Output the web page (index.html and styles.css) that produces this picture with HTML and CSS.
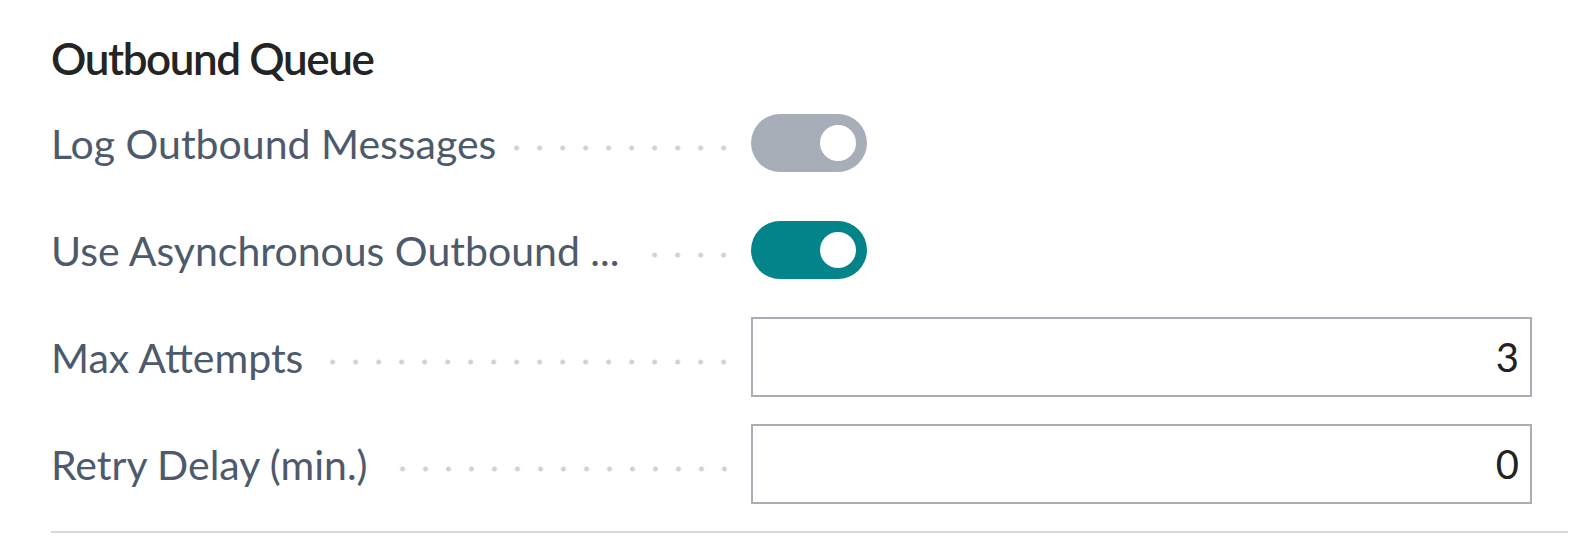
FILE: index.html
```html
<!DOCTYPE html>
<html lang="en">
<head>
<meta charset="utf-8">
<title>Outbound Queue</title>
<link rel="stylesheet" href="styles.css">
</head>
<body>
<section class="group">
  <h2 class="group-title">Outbound Queue</h2>
  <div class="form">
    <div class="caption"><span class="caption-text">Log Outbound Messages</span><span class="leader"></span></div>
    <div class="control"><span class="toggle toggle-off"><span class="knob"></span></span></div>

    <div class="caption"><span class="caption-text">Use Asynchronous Outbound ...</span><span class="leader"></span></div>
    <div class="control"><span class="toggle toggle-on"><span class="knob"></span></span></div>

    <div class="caption"><span class="caption-text">Max Attempts</span><span class="leader"></span></div>
    <div class="control"><div class="input">3</div></div>

    <div class="caption"><span class="caption-text">Retry Delay (min.)</span><span class="leader"></span></div>
    <div class="control"><div class="input">0</div></div>
  </div>
  <div class="divider"></div>
</section>
</body>
</html>
```

FILE: styles.css
```css
* { box-sizing: border-box; }

html, body {
  margin: 0;
  padding: 0;
  background: #ffffff;
}

body {
  font-family: Lato, "Liberation Sans", sans-serif;
}

.group {
  padding: 32px 28px 0 51px;
}

.group-title {
  margin: 0;
  font-size: 44px;
  line-height: 53px;
  font-weight: 600;
  letter-spacing: -1.4px;
  color: #242424;
}

.form {
  margin-top: 18px;
  display: grid;
  grid-template-columns: 676px 781px;
  column-gap: 24px;
  row-gap: 27px;
  grid-auto-rows: 80px;
}

.caption {
  display: flex;
  align-items: center;
  min-width: 0;
}

.caption-text {
  font-size: 41px;
  line-height: 49px;
  color: #4d5a6c;
  white-space: nowrap;
  padding-right: 18px;
}

.leader {
  flex: 1;
  height: 6px;
  margin-top: 10px;
  background-image: radial-gradient(circle at calc(100% - 3px) 50%, #cfd3d8 0, #cfd3d8 2.2px, rgba(207, 211, 216, 0) 2.9px);
  background-size: 23px 6px;
  background-repeat: repeat-x;
  background-position: right center;
}

.control {
  display: flex;
  align-items: center;
}

.toggle {
  width: 116px;
  height: 58px;
  border-radius: 29px;
  display: flex;
  align-items: center;
  justify-content: flex-end;
  padding-right: 11px;
}

.toggle-off { background: #a8aeb7; }
.toggle-on { background: #03838a; }

.knob {
  width: 36px;
  height: 36px;
  border-radius: 50%;
  background: #ffffff;
}

.input {
  width: 100%;
  height: 80px;
  border: 2px solid #a9aeb6;
  background: #ffffff;
  display: flex;
  align-items: center;
  justify-content: flex-end;
  padding-right: 11px;
  font-size: 40px;
  color: #222222;
}

.divider {
  margin-top: 27px;
  height: 2px;
  background: #d8d8d8;
}
```
